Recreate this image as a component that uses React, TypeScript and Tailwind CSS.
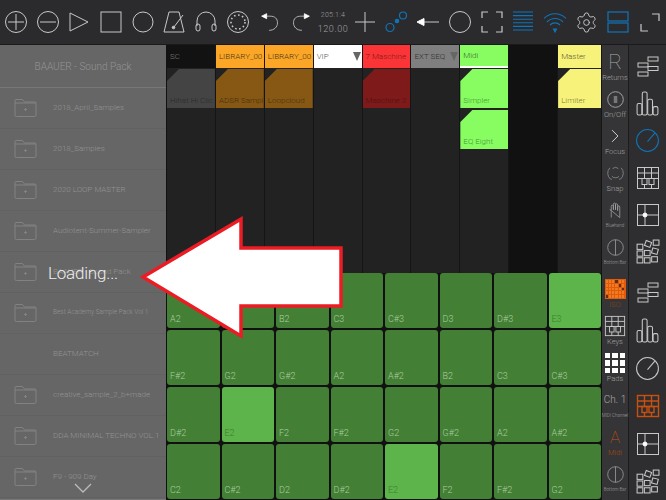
import React from 'react';
import { Settings } from 'lucide-react';

const BLUE = '#0f74b8';
const ORANGE = '#c9500f';
const LINE = '#c8c8c8';

const Svg = ({ s = 24, color = LINE, sw = 1, children }: { s?: number; color?: string; sw?: number; children: React.ReactNode }) => (
  <svg width={s} height={s} viewBox="0 0 24 24" fill="none" stroke={color} strokeWidth={sw}>
    {children}
  </svg>
);

// top bar icons, left to right
const topIcons: React.ReactNode[] = [
  <Svg><circle cx="12" cy="12" r="10.5" /><path d="M12 4v16M4 12h16" /></Svg>,
  <Svg><circle cx="12" cy="12" r="10.5" /><path d="M4 12h16" /></Svg>,
  <Svg><path d="M3 3l18 9-18 9z" /></Svg>,
  <Svg><rect x="2" y="2" width="20" height="20" /></Svg>,
  <Svg><circle cx="12" cy="12" r="10" /></Svg>,
  <Svg><path d="M7 2h10l5 20H2zM12 17L21 5" /><circle cx="11.5" cy="17.5" r="1.3" fill={LINE} /></Svg>,
  <Svg><path d="M3 16v-5a9 9 0 0 1 18 0v5" /><rect x="2" y="14" width="4" height="7" rx="2" /><rect x="18" y="14" width="4" height="7" rx="2" /></Svg>,
  <Svg><circle cx="12" cy="12" r="10.5" /><circle cx="12" cy="12" r="7" strokeWidth="1.6" strokeDasharray="1.6 2.5" /></Svg>,
  <Svg s={20}><path d="M8 5h4c6 0 9 3 9 8s-4 9-10 9" /><path d="M2 5l6-3v6z" fill="#fff" stroke="#fff" /></Svg>,
  <Svg s={20}><path d="M16 5h-4c-6 0-9 3-9 8s4 9 10 9" /><path d="M22 5l-6-3v6z" fill="#fff" stroke="#fff" /></Svg>,
  null,
  <Svg><path d="M2 12h20M12 2v20" /></Svg>,
  <Svg color={BLUE} sw={1.2}><circle cx="6" cy="17.5" r="4" /><circle cx="19" cy="5.5" r="3.5" /><circle cx="13" cy="11" r="1.7" fill={BLUE} /></Svg>,
  <Svg><path d="M8 12h15" /><path d="M1 12l7-3.5v7z" fill="#fff" stroke="#fff" /></Svg>,
  <Svg s={24}><circle cx="12" cy="12" r="10.5" /></Svg>,
  <Svg sw={1.2}><path d="M8 2H2v6M16 2h6v6M8 22H2v-6M16 22h6v-6" /></Svg>,
  <Svg color={BLUE} sw={1.1}><path d="M2 2h20M2 5.6h20M2 9.2h20M2 12.8h20M2 16.4h20M2 20h20" /></Svg>,
  <Svg color={BLUE} sw={1.1}><path d="M1 8.5a15 15 0 0 1 22 0M4 12a11 11 0 0 1 16 0M7 15a7 7 0 0 1 10 0" /><path d="M10.5 19h3L12 22z" fill={BLUE} /></Svg>,
  <Settings size={23} strokeWidth={1} color={LINE} />,
  <Svg color={BLUE} sw={1.2}><rect x="2" y="2" width="20" height="9" /><rect x="2" y="13" width="20" height="9" /></Svg>,
  <Svg sw={1.2}><path d="M14 4h7v7M3 14v7h7" /></Svg>,
];

type Track = { name: string; head: string; text: string; tri?: boolean; line?: boolean };

const tracks: Track[] = [
  { name: 'SC', head: 'bg-[#121212]', text: 'text-[#777]' },
  { name: 'LIBRARY_00', head: 'bg-[#fba626]', text: 'text-[#4a3a1a]' },
  { name: 'LIBRARY_00', head: 'bg-[#fba626]', text: 'text-[#4a3a1a]' },
  { name: 'VIP', head: 'bg-white', text: 'text-[#555]', tri: true },
  { name: '7 Maschine', head: 'bg-[#fb3537]', text: 'text-[#7c1a1a]' },
  { name: 'EXT SEQ', head: 'bg-[#7f7f7f]', text: 'text-[#333]', tri: true },
  { name: 'Midi', head: 'bg-[#88fd62]', text: 'text-[#3b6a2c]', line: true },
  { name: '', head: 'bg-[#111]', text: '' },
  { name: 'Master', head: 'bg-[#f7f37a]', text: 'text-[#5f5d2f]' },
];

const devices: { name: string; bg: string; text: string }[][] = [
  [{ name: 'Hihat Hi Clic', bg: 'bg-[#444]', text: 'text-[#2b2b2b]' }],
  [{ name: 'ADSR Sampl', bg: 'bg-[#865814]', text: 'text-[#46300c]' }],
  [{ name: 'Loopcloud', bg: 'bg-[#865814]', text: 'text-[#46300c]' }],
  [],
  [{ name: 'Maschine 2', bg: 'bg-[#7f1a1a]', text: 'text-[#4c1212]' }],
  [],
  [
    { name: 'Simpler', bg: 'bg-[#88fd62]', text: 'text-[#459a33]' },
    { name: 'EQ Eight', bg: 'bg-[#88fd62]', text: 'text-[#459a33]' },
  ],
  [],
  [{ name: 'Limiter', bg: 'bg-[#f7f37a]', text: 'text-[#7f7c3a]' }],
];

const pads = [
  'A2', 'A#2', 'B2', 'C3', 'C#3', 'D3', 'D#3', 'E3',
  'F#2', 'G2', 'G#2', 'A2', 'A#2', 'B2', 'C3', 'C#3',
  'D#2', 'E2', 'F2', 'F#2', 'G2', 'G#2', 'A2', 'A#2',
  'C2', 'C#2', 'D2', 'D#2', 'E2', 'F2', 'F#2', 'G2',
];
const litPads = [7, 17, 28];

const browserRows: { name: string; small?: boolean; noIcon?: boolean }[] = [
  { name: '2018_April_Samples' },
  { name: '2018_Samples' },
  { name: '2020 LOOP MASTER' },
  { name: 'Audiotent-Summer-Sampler' },
  { name: 'BAAUER - Sound Pack' },
  { name: 'Best Academy Sample Pack Vol 1', small: true },
  { name: 'BEATMATCH', noIcon: true },
  { name: 'creative_sample_2_b+made' },
  { name: 'DDA MINIMAL TECHNO VOL.1' },
  { name: 'F9 - 909 Day' },
];

const Folder = () => (
  <svg width="23" height="20" viewBox="0 0 23 20" fill="none" stroke="#828282" strokeWidth="1">
    <path d="M1 18V2.5A1 1 0 0 1 2 1.5h6.5l2 2.5H21a1 1 0 0 1 1 1V17a1.5 1.5 0 0 1-1.5 1.5H2.5A1.5 1.5 0 0 1 1 18zM1 5h21" />
    <path d="M10 11.5h3M11.5 10v3" />
  </svg>
);

// right column icons
const MixIcon = () => (
  <Svg s={24}><rect x="12" y="2" width="10" height="4" /><rect x="2" y="8" width="10" height="4" /><rect x="12" y="11.5" width="10" height="4" /><rect x="2" y="17" width="10" height="4" /></Svg>
);
const BarsIcon = () => (
  <Svg s={25}><rect x="2" y="12" width="4.6" height="11" rx="1.5" /><rect x="7" y="1" width="4.6" height="22" rx="1.5" /><rect x="12.2" y="8" width="4.6" height="15" rx="1.5" /><rect x="17.4" y="15" width="4.6" height="8" rx="1.5" /></Svg>
);
const DialIcon = ({ color = LINE }: { color?: string }) => (
  <Svg s={25} color={color}><circle cx="12" cy="12" r="10.5" /><path d="M12 13L19 5" /></Svg>
);
const KeysIcon = ({ color = LINE, s = 24 }: { color?: string; s?: number }) => (
  <Svg s={s} color={color} sw={color === LINE ? 1 : 1.4}>
    <rect x="1.5" y="1.5" width="21" height="21" />
    <path d="M1.5 7h21M1.5 12.5h21M8.5 1.5v11M15.5 1.5v11M8.5 18.5v4M15.5 18.5v4" />
    <rect x="6" y="12.5" width="5" height="6" />
    <rect x="13" y="12.5" width="5" height="6" />
  </Svg>
);
const XyIcon = () => (
  <Svg s={24}><rect x="1.5" y="1.5" width="21" height="21" /><path d="M9 1.5v21M1.5 12h21" /><circle cx="9" cy="12" r="2" fill="#fff" stroke="#fff" /></Svg>
);
const ClipsIcon = () => (
  <Svg s={25} sw={1}><rect x="2" y="5" width="5.5" height="5" /><rect x="10" y="2" width="5.5" height="5" transform="rotate(20 12 4)" /><rect x="17.5" y="1" width="5.5" height="5" /><rect x="2" y="11.5" width="5.5" height="5" /><rect x="9" y="11" width="5.5" height="5" /><rect x="16.5" y="9" width="5.5" height="5" transform="rotate(15 19 11)" /><rect x="2" y="18" width="5.5" height="5" /><rect x="9" y="18" width="5.5" height="5" /><rect x="16" y="17" width="5.5" height="5" /></Svg>
);

const rightIcons: React.ReactNode[] = [
  <MixIcon />, <BarsIcon />, <DialIcon color={BLUE} />, <KeysIcon />, <XyIcon />, <ClipsIcon />,
  <MixIcon />, <BarsIcon />, <DialIcon />, <KeysIcon color={ORANGE} />, <XyIcon />, <ClipsIcon />,
];

const BottomBar = () => (
  <Svg s={17} color="#aaa"><circle cx="12" cy="12" r="11" /><path d="M12 1v22" /></Svg>
);

const sideItems: { icon: React.ReactNode; label: string; tiny?: boolean; color?: string }[] = [
  { icon: <span className="text-[21px] leading-[20px] font-thin text-[#aaa]">R</span>, label: 'Returns' },
  { icon: <Svg s={17} color="#aaa" sw={1.3}><circle cx="12" cy="12" r="11" /><rect x="9.5" y="7" width="5" height="10" fill="#777" stroke="none" /></Svg>, label: 'On/Off' },
  { icon: <Svg s={14} color="#ddd" sw={1.6}><path d="M7 2l10 10L7 22" /></Svg>, label: 'Focus' },
  { icon: <Svg s={17} color="#999"><path d="M7 20H5a11 11 0 0 1-1-16M17 20h2a11 11 0 0 0 1-16" /><path d="M8 5a6 6 0 0 1 8 0" /><path d="M7 16a7 7 0 0 0 10 0" /></Svg>, label: 'Snap' },
  { icon: <Svg s={17} color="#aaa"><path d="M6 22v-9l-2-3M6 12V6a1.3 1.3 0 0 1 3 0v5V3a1.3 1.3 0 0 1 3 0v8V4a1.3 1.3 0 0 1 3 0v8V7a1.3 1.3 0 0 1 3 0v15z" /></Svg>, label: 'Bluehand', tiny: true },
  { icon: <BottomBar />, label: 'Bottom Bar', tiny: true },
  { icon: <div className="w-[21px] h-[20px] bg-[#e0590c] grid grid-cols-6 gap-px p-px">{Array.from({ length: 30 }).map((_, i) => <div key={i} className={i % 7 === 3 ? 'bg-[#5a3010]' : 'bg-[#f07a20]'} />)}</div>, label: 'ISO', color: 'text-[#7a4520]' },
  { icon: <KeysIcon s={22} />, label: 'Keys' },
  { icon: <div className="grid grid-cols-3 gap-[2px] w-[20px] h-[20px]">{Array.from({ length: 9 }).map((_, i) => <div key={i} className="bg-white" />)}</div>, label: 'Pads' },
  { icon: <span className="text-[10px] leading-[14px] font-light text-[#aaa] whitespace-nowrap">Ch. 1</span>, label: 'MIDI Channel', tiny: true },
  { icon: <span className="text-[17px] leading-[19px] font-thin text-[#c9500f]">A</span>, label: 'Midi', color: 'text-[#a8480f]' },
  { icon: <BottomBar />, label: 'Bottom Bar', tiny: true },
];

export default function App() {
  return (
    <div className="relative w-[666px] h-[500px] overflow-hidden bg-[#111] font-['Roboto',sans-serif]">
      {/* top toolbar */}
      <div className="grid grid-cols-[repeat(21,1fr)] h-[45px] bg-[#2b2b2e] items-center border-b border-[#1a1a1a]">
        {topIcons.map((icon, i) => (
          <div key={i} className="flex items-center justify-center">
            {icon ?? (
              <div className="text-center font-light text-[#a0a0a0] leading-none whitespace-nowrap mt-[2px]">
                <div className="text-[7px] mb-[6px] tracking-[0.3px]">205:1:4</div>
                <div className="text-[9px] tracking-[0.6px]">120.00</div>
              </div>
            )}
          </div>
        ))}
      </div>

      <div className="flex h-[455px]">
        {/* browser */}
        <div className="w-[166px] mr-px bg-[#666] flex flex-col border-b border-[#777]">
          <div className="h-[43px] flex items-center justify-center text-[10px] font-light text-[#939393] border-b border-[#777]">
            BAAUER - Sound Pack
          </div>
          {browserRows.map((row, i) => (
            <div key={i} className="h-[41px] shrink-0 flex items-center border-b border-[#616161] pl-[14px]">
              <div className="w-[39px] shrink-0">{!row.noIcon && <Folder />}</div>
              <span className={`${row.small ? 'text-[6.5px]' : 'text-[8px]'} font-light text-[#939393] whitespace-nowrap`}>{row.name}</span>
            </div>
          ))}
        </div>

        {/* tracks and pads */}
        <div className="w-[435px] flex flex-col">
          <div className="h-[228px] grid grid-cols-[repeat(8,48.9px)_1fr]">
            {tracks.map((t, i) => (
              <div key={i} className={`${i === 7 ? 'bg-[#111]' : 'bg-[#222]'} border-r border-[#151515] flex flex-col`}>
                <div className={`relative h-[23px] shrink-0 ${t.head} ${t.text} ${t.line ? 'border-b-2 border-white' : ''} text-[8px] font-light flex items-center pl-[3px] overflow-hidden whitespace-nowrap`}>
                  {t.name}
                  {t.tri && <div className="absolute right-[1px] top-[7px] w-0 h-0 border-l-[4px] border-r-[4px] border-t-[9px] border-l-transparent border-r-transparent border-t-[#666]" />}
                </div>
                <div className="flex flex-col gap-[2px] mt-px">
                  {devices[i].map((d) => (
                    <div key={d.name} className={`h-[39px] ${d.bg} ${d.text} [clip-path:polygon(12px_0,100%_0,100%_100%,0_100%,0_12px)] text-[8px] font-light flex items-end pl-[3px] pb-[1px] overflow-hidden whitespace-nowrap`}>
                      {d.name}
                    </div>
                  ))}
                </div>
              </div>
            ))}
          </div>
          <div className="flex-1 grid grid-cols-8 grid-rows-4 gap-[2px] pr-px pb-px bg-[#111]">
            {pads.map((p, i) => (
              <div key={i} className={`rounded-[3px] ${litPads.includes(i) ? 'bg-[#5db44b] text-[#3f7d33]' : 'bg-[#437f34] text-[#a9cba0]'} text-[9px] font-light flex items-end pl-[3px] pb-[2px]`}>
                {p}
              </div>
            ))}
          </div>
        </div>

        {/* narrow tool column */}
        <div className="w-[27px] bg-[#353537] border-r border-[#1c1c1c] flex flex-col">
          {sideItems.map((it, i) => (
            <div key={i} className={`h-[37px] shrink-0 flex flex-col items-center justify-end ${i === 5 ? 'mb-[5px]' : ''}`}>
              <div className="flex items-center justify-center h-[22px]">{it.icon}</div>
              <div className={`${it.tiny ? 'text-[4.5px]' : 'text-[7.5px]'} ${it.color ?? 'text-[#a0a0a0]'} leading-[9px] font-light whitespace-nowrap`}>{it.label}</div>
            </div>
          ))}
        </div>

        {/* main view column */}
        <div className="flex-1 bg-[#2e2e30] flex flex-col pt-[3px]">
          {rightIcons.map((icon, i) => (
            <div key={i} className={`${i < 6 ? 'h-[37px]' : 'h-[37.7px]'} ${i === 5 ? 'mb-[4px]' : ''} shrink-0 flex items-center justify-center`}>{icon}</div>
          ))}
        </div>
      </div>

      {/* arrow callout */}
      <svg className="absolute left-[138px] top-[214px]" width="208" height="126" viewBox="0 0 208 126" fill="none">
        <path d="M5 63L103 5V34H203V92H103V122Z" fill="#fff" stroke="#ec1c24" strokeWidth="3.5" />
      </svg>

      <div className="absolute left-[48px] top-[261px] text-[17px] tracking-[-0.2px] font-light text-[#eee] leading-[24px]">Loading...</div>

      {/* scroll chevron */}
      <svg className="absolute left-[73px] top-[482px]" width="20" height="12" viewBox="0 0 20 12" fill="none" stroke="#bbb" strokeWidth="1.3">
        <path d="M2 2l8 8 8-8" />
      </svg>
    </div>
  );
}
